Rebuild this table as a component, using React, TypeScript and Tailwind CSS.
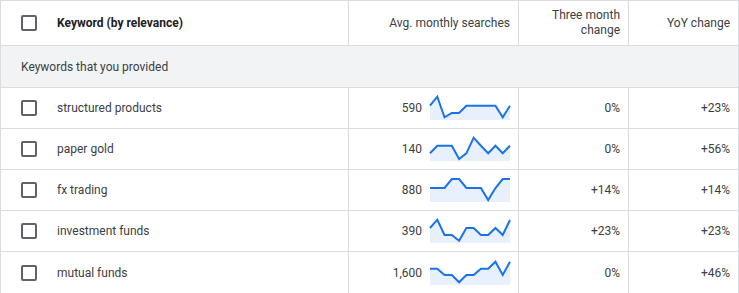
import React from 'react';

type Row = {
  keyword: string;
  searches: string;
  trend: number[];
  threeMonth: string;
  yoy: string;
};

const rows: Row[] = [
  { keyword: 'structured products', searches: '590', trend: [9.7, 0.7, 21.3, 17, 17, 9.7, 9.7, 9.7, 9.7, 9.7, 21.3, 9.7], threeMonth: '0%', yoy: '+23%' },
  { keyword: 'paper gold', searches: '140', trend: [16.3, 8.7, 8.7, 8.7, 22, 16.3, 0.7, 8.7, 16.3, 8.7, 16.3, 8.7], threeMonth: '0%', yoy: '+56%' },
  { keyword: 'fx trading', searches: '880', trend: [10, 10, 10, 1, 1, 10, 10, 10, 22, 10, 1, 1], threeMonth: '+14%', yoy: '+14%' },
  { keyword: 'investment funds', searches: '390', trend: [9, 0.7, 16, 16, 21.7, 9, 9, 16, 16, 9, 16, 1], threeMonth: '+23%', yoy: '+23%' },
  { keyword: 'mutual funds', searches: '1,600', trend: [7.7, 7.7, 14, 14, 21.3, 14, 14, 7.7, 7.7, 0.7, 14, 0.7], threeMonth: '0%', yoy: '+46%' },
];

const Checkbox = () => <span className="block h-4 w-4 shrink-0 rounded-[2px] border-2 border-[#5f6368]" />;

function Sparkline({ values }: { values: number[] }) {
  const step = 80 / (values.length - 1);
  const pts = values.map((v, i) => `${(i * step).toFixed(2)},${v}`);
  const line = pts.join(' ');
  const area = `0,24 ${line} 80,24`;
  return (
    <svg width="80" height="24" viewBox="0 0 80 24" className="block shrink-0 overflow-visible">
      <polygon points={area} fill="#e8f0fe" />
      <polyline points={line} fill="none" stroke="#1a73e8" strokeWidth="2" strokeLinejoin="miter" />
    </svg>
  );
}

export default function App() {
  return (
    <div className="w-[739px] border border-[#dadce0] bg-white text-[12px] text-[#3c4043]" style={{ fontFamily: 'Roboto, "Liberation Sans", sans-serif' }}>
      <div className="flex h-[45px] border-b border-[#dadce0]">
        <div className="flex w-[348px] items-center gap-5 border-r border-[#dadce0] pl-5">
          <Checkbox />
          <span className="font-bold text-[#202124]">Keyword (by relevance)</span>
        </div>
        <div className="flex w-[170px] items-center justify-end border-r border-[#dadce0] pr-2">Avg. monthly searches</div>
        <div className="flex w-[110px] items-center justify-end border-r border-[#dadce0] pr-2 text-right leading-[15px]">
          Three month
          <br />
          change
        </div>
        <div className="flex flex-1 items-center justify-end pr-2">YoY change</div>
      </div>
      <div className="flex h-[42px] items-center border-b border-[#dadce0] bg-[#f1f3f4] pl-5">Keywords that you provided</div>
      {rows.map((row, i) => (
        <div key={row.keyword} className={`flex h-[41px] ${i < rows.length - 1 ? 'border-b border-[#dadce0]' : ''}`}>
          <div className="flex w-[348px] items-center gap-5 border-r border-[#dadce0] pl-5">
            <Checkbox />
            <span>{row.keyword}</span>
          </div>
          <div className="flex w-[170px] items-center justify-end gap-2 border-r border-[#dadce0] pr-2">
            <span>{row.searches}</span>
            <Sparkline values={row.trend} />
          </div>
          <div className="flex w-[110px] items-center justify-end border-r border-[#dadce0] pr-2">{row.threeMonth}</div>
          <div className="flex flex-1 items-center justify-end pr-2">{row.yoy}</div>
        </div>
      ))}
    </div>
  );
}
